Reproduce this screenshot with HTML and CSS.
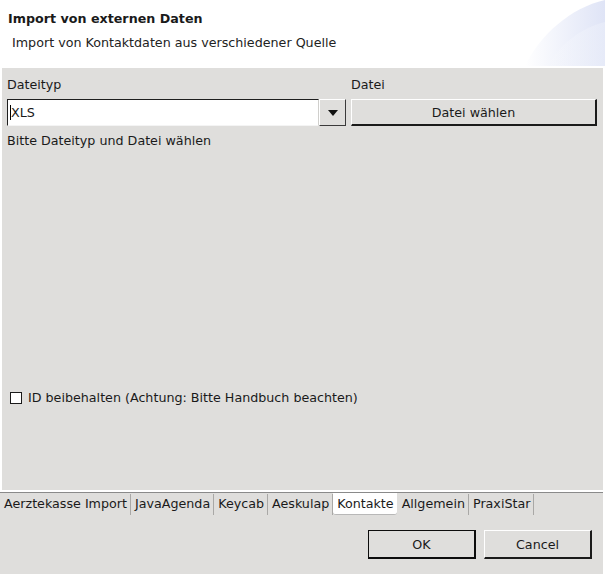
FILE: index.html
```html
<!DOCTYPE html>
<html>
<head>
<meta charset="utf-8">
<link rel="stylesheet" href="styles.css">
</head>
<body>
<div class="window">
  <div class="header">
    <div class="title">Import von externen Daten</div>
    <div class="subtitle">Import von Kontaktdaten aus verschiedener Quelle</div>
    <svg class="deco" width="80" height="66" viewBox="0 0 80 66">
      <defs>
        <linearGradient id="g1" x1="0" y1="0" x2="1" y2="0">
          <stop offset="0" stop-color="#ffffff"/>
          <stop offset="1" stop-color="#dfe4f6"/>
        </linearGradient>
        <linearGradient id="g2" x1="0" y1="0" x2="1" y2="0">
          <stop offset="0" stop-color="#ffffff" stop-opacity="0"/>
          <stop offset="1" stop-color="#e9edf9"/>
        </linearGradient>
      </defs>
      <path d="M0 66 C 15 35, 45 8, 80 0 L80 66 Z" fill="url(#g1)"/>
      <path d="M22 66 C 35 45, 55 28, 80 22 L80 66 Z" fill="url(#g2)" opacity="0.7"/>
    </svg>
  </div>
  <div class="panel">
    <div class="row">
      <div class="col-type">
        <div class="label">Dateityp</div>
        <div class="combo">
          <div class="field"><span class="caret"></span>XLS</div>
          <div class="drop"><span class="tri"></span></div>
        </div>
      </div>
      <div class="col-file">
        <div class="label">Datei</div>
        <div class="btn file-btn">Datei wählen</div>
      </div>
    </div>
    <div class="hint">Bitte Dateityp und Datei wählen</div>
    <div class="check-row">
      <span class="box"></span>
      <span>ID beibehalten (Achtung: Bitte Handbuch beachten)</span>
    </div>
  </div>
  <div class="bottom">
    <div class="tabs">
      <div class="tab">Aerztekasse Import</div>
      <div class="tab">JavaAgenda</div>
      <div class="tab">Keycab</div>
      <div class="tab">Aeskulap</div>
      <div class="tab active">Kontakte</div>
      <div class="tab">Allgemein</div>
      <div class="tab">PraxiStar</div>
    </div>
    <div class="buttons">
      <div class="btn ok">OK</div>
      <div class="btn cancel">Cancel</div>
    </div>
  </div>
</div>
</body>
</html>
```
FILE: styles.css
```css
* { box-sizing: border-box; }
html, body {
  margin: 0;
  padding: 0;
  background: #ffffff;
}
body {
  font-family: "DejaVu Sans", sans-serif;
  font-size: 12.7px;
  color: #1a1a1a;
}
.window {
  width: 605px;
  height: 574px;
  display: flex;
  flex-direction: column;
}
.header {
  position: relative;
  height: 68px;
  background: #ffffff;
  padding: 11px 0 0 8px;
}
.title {
  font-weight: bold;
  line-height: 16px;
}
.subtitle {
  margin: 8px 0 0 4px;
  line-height: 16px;
  color: #222;
}
.deco {
  position: absolute;
  right: 0;
  top: 0;
}
.panel {
  margin: 0 2px;
  height: 422px;
  background: #dfdedc;
  padding: 9px 6px 0 5px;
  display: flex;
  flex-direction: column;
}
.row {
  display: flex;
  gap: 5px;
}
.col-type { width: 339px; }
.col-file { flex: 1; }
.label {
  height: 15px;
  line-height: 15px;
  margin-bottom: 7px;
}
.combo {
  display: flex;
  height: 27px;
}
.field {
  flex: 1;
  background: #fff;
  border-top: 1px solid #1e1e1e;
  border-left: 1px solid #1e1e1e;
  border-right: 1px solid #d0cfcc;
  border-bottom: 1px solid #f4f4f4;
  padding-left: 2px;
  line-height: 24px;
  display: flex;
  align-items: center;
}
.caret {
  display: inline-block;
  width: 1px;
  height: 15px;
  background: #000;
}
.drop {
  width: 27px;
  background: #dfdedc;
  border-top: 1px solid #ffffff;
  border-left: 1px solid #ffffff;
  border-right: 1px solid #3a3a3a;
  border-bottom: 1px solid #3a3a3a;
  display: flex;
  align-items: center;
  justify-content: center;
}
.tri {
  width: 0;
  height: 0;
  border-left: 5px solid transparent;
  border-right: 5px solid transparent;
  border-top: 6px solid #111;
}
.btn {
  background: #dfdedc;
  border-top: 1px solid #ffffff;
  border-left: 1px solid #ffffff;
  border-right: 2px solid #1a1a1a;
  border-bottom: 2px solid #1a1a1a;
  display: flex;
  align-items: center;
  justify-content: center;
}
.file-btn {
  height: 27px;
}
.hint {
  margin-top: 7px;
  line-height: 15px;
}
.check-row {
  margin-top: 242px;
  margin-left: 3px;
  display: flex;
  align-items: center;
  gap: 6px;
  line-height: 15px;
}
.box {
  width: 12px;
  height: 12px;
  border: 1px solid #1a1a1a;
  background: #fff;
}
.bottom {
  flex: 1;
  margin-top: 2px;
  margin-right: 2px;
  background: #dfdedc;
  border-top: 1px solid #8a8a8a;
  display: flex;
  flex-direction: column;
}
.tabs {
  display: flex;
  height: 22px;
  padding-left: 0;
}
.tab {
  padding: 0 3px 0 4px;
  line-height: 20px;
  border-right: 1px solid #a9a8a6;
  margin-top: 1px;
}
.tab.active {
  background: #ffffff;
  border-right: none;
  border-radius: 0 0 3px 3px;
  margin-top: 0;
  padding: 1px 3px 0 4px;
  border-bottom: 1px solid #b8b8b8;
  margin-right: 1px;
}
.buttons {
  display: flex;
  justify-content: flex-end;
  gap: 8px;
  padding: 15px 11px 0 0;
}
.ok {
  width: 108px;
  height: 29px;
  border: 2px solid #0c0c0c;
  border-top: 1px solid #0c0c0c;
  border-left: 1px solid #0c0c0c;
}
.cancel {
  width: 108px;
  height: 29px;
}
```
